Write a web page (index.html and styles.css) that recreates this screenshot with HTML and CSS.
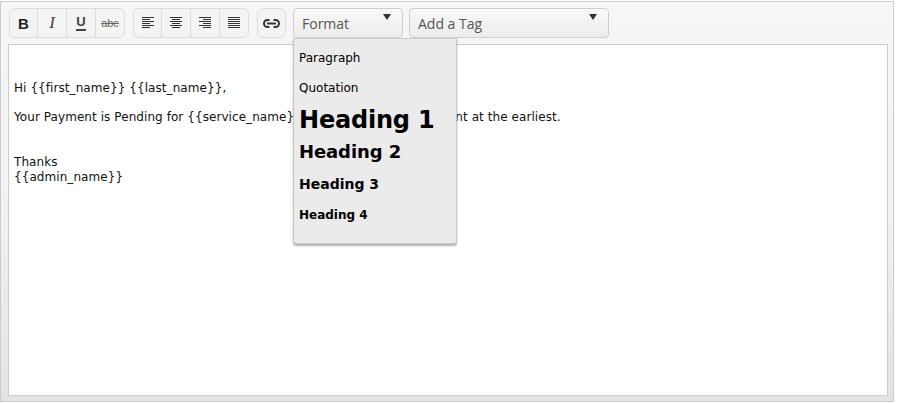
FILE: index.html
```html
<!DOCTYPE html>
<html lang="en">
<head>
<meta charset="utf-8">
<title>Editor</title>
<link rel="stylesheet" href="styles.css">
</head>
<body>
<div class="editor">
  <div class="toolbar">
    <div class="group">
      <button class="btn bold">B</button>
      <button class="btn italic">I</button>
      <button class="btn underline"><span class="u-letter">U</span></button>
      <button class="btn strike">abc</button>
    </div>
    <div class="group">
      <button class="btn"><svg width="14" height="12" viewBox="0 0 14 12"><path d="M1 .5h12M1 2.5h8M1 4.5h12M1 6.5h8M1 8.5h12M1 10.5h8" class="ln"/></svg></button>
      <button class="btn"><svg width="14" height="12" viewBox="0 0 14 12"><path d="M1 .5h12M3 2.5h8M1 4.5h12M3 6.5h8M1 8.5h12M3 10.5h8" class="ln"/></svg></button>
      <button class="btn"><svg width="14" height="12" viewBox="0 0 14 12"><path d="M1 .5h12M5 2.5h8M1 4.5h12M5 6.5h8M1 8.5h12M5 10.5h8" class="ln"/></svg></button>
      <button class="btn"><svg width="14" height="12" viewBox="0 0 14 12"><path d="M1 .5h12M1 2.5h12M1 4.5h12M1 6.5h12M1 8.5h12M1 10.5h12" class="ln"/></svg></button>
    </div>
    <div class="group group-last">
      <button class="btn"><svg width="17" height="9" viewBox="0 0 17 9"><path d="M6.5 1H4.5a3.5 3.5 0 0 0 0 7h2M10.5 1h2a3.5 3.5 0 0 1 0 7h-2M4 4.5h9" class="link"/></svg></button>
    </div>
    <div class="select format">Format<span class="caret"></span></div>
    <div class="select tag">Add a Tag<span class="caret"></span></div>
  </div>
  <div class="content">
    <p class="greeting">Hi {{first_name}} {{last_name}},</p>
    <p class="message">Your Payment is Pending for {{service_name}}. Please make the payment at the earliest.</p>
    <p class="signoff">Thanks<br>{{admin_name}}</p>
  </div>
  <ul class="menu">
    <li class="item para">Paragraph</li>
    <li class="item quote">Quotation</li>
    <li class="item h1">Heading 1</li>
    <li class="item h2">Heading 2</li>
    <li class="item h3">Heading 3</li>
    <li class="item h4">Heading 4</li>
  </ul>
</div>
</body>
</html>
```
FILE: styles.css
```css
* { box-sizing: border-box; }
html, body { margin: 0; padding: 0; background: #fff; }
body { width: 897px; height: 403px; overflow: hidden; }

.editor {
  position: relative;
  width: 894px;
  height: 401px;
  margin-top: 1px;
  padding: 0 5px 5px 7px;
  background: linear-gradient(#f6f6f6, #f2f2f2 50%, #e3e3e3);
  border: 1px solid #cccccc;
  display: flex;
  flex-direction: column;
}

.toolbar {
  display: flex;
  height: 42px;
  padding: 6px 0 0 1px;
  flex: none;
}

.group {
  display: flex;
  height: 30px;
  margin-right: 8px;
  border: 1px solid #dcdcdc;
  border-radius: 6px;
  background: #f4f4f4;
}
.group-last { margin-right: 7px; }

.btn {
  width: 29px;
  padding: 0;
  border: 0;
  border-left: 1px solid #dcdcdc;
  background: none;
  color: #333;
  display: flex;
  align-items: center;
  justify-content: center;
  font-family: "Liberation Sans", sans-serif;
}
.btn:first-child { border-left: 0; width: 27px; }

.bold { font-weight: 700; font-size: 15px; color: #222; }
.italic { font-family: "Liberation Serif", serif; font-style: italic; font-size: 17px; color: #444; }
.underline { font-weight: 700; font-size: 13px; }
.u-letter { display: block; line-height: 12px; padding: 0 0 1px; border-bottom: 2px solid #444; color: #444; margin-top: 1px; }
.strike { font-size: 11px; text-decoration: line-through; text-decoration-thickness: 1px; color: #666; }

.ln { stroke: #333; stroke-width: 1; fill: none; }
.link { stroke: #333; stroke-width: 2; fill: none; }

.select {
  position: relative;
  height: 30px;
  padding: 5px 8px 0;
  margin-right: 6px;
  border: 1px solid #cfcfcf;
  border-radius: 4px;
  background: linear-gradient(#f9f9f9, #ececec);
  font: 14px/20px "Open Sans", sans-serif;
  color: #555;
}
.format { width: 110px; }
.tag { width: 200px; }

.caret {
  position: absolute;
  top: 5px;
  right: 11px;
  border-style: solid;
  border-width: 6px 4px 0;
  border-color: #333 transparent transparent;
}

.content {
  flex: 1;
  padding: 36px 5px 0;
  background: #fff;
  border: 1px solid #cccccc;
  font: 12px/15px "DejaVu Sans", Verdana, sans-serif;
  letter-spacing: .07px;
  color: #111;
}
.content p { margin: 0; }
.content .greeting { margin-bottom: 14px; }
.content .message { margin-bottom: 30px; }

.menu {
  position: absolute;
  left: 292px;
  top: 36px;
  width: 164px;
  height: 206px;
  margin: 0;
  padding: 0 0 0 5px;
  list-style: none;
  background: #ebebeb;
  border: 1px solid #c8c8c8;
  border-radius: 0 0 3px 3px;
  box-shadow: 0 2px 2px rgba(0,0,0,.3);
  font-family: "DejaVu Sans", Verdana, sans-serif;
  color: #000;
}
.item { white-space: nowrap; }
.para { font-size: 12px; line-height: 16px; margin-top: 11px; }
.quote { font-size: 12px; line-height: 16px; margin-top: 14px; }
.h1 { font-size: 24px; font-weight: 700; line-height: 30px; margin-top: 9px; letter-spacing: -.2px; }
.h2 { font-size: 18px; font-weight: 700; line-height: 22px; margin-top: 6px; letter-spacing: -.1px; }
.h3 { font-size: 14px; font-weight: 700; line-height: 18px; margin-top: 12px; }
.h4 { font-size: 12px; font-weight: 700; line-height: 16px; margin-top: 14px; }
```
